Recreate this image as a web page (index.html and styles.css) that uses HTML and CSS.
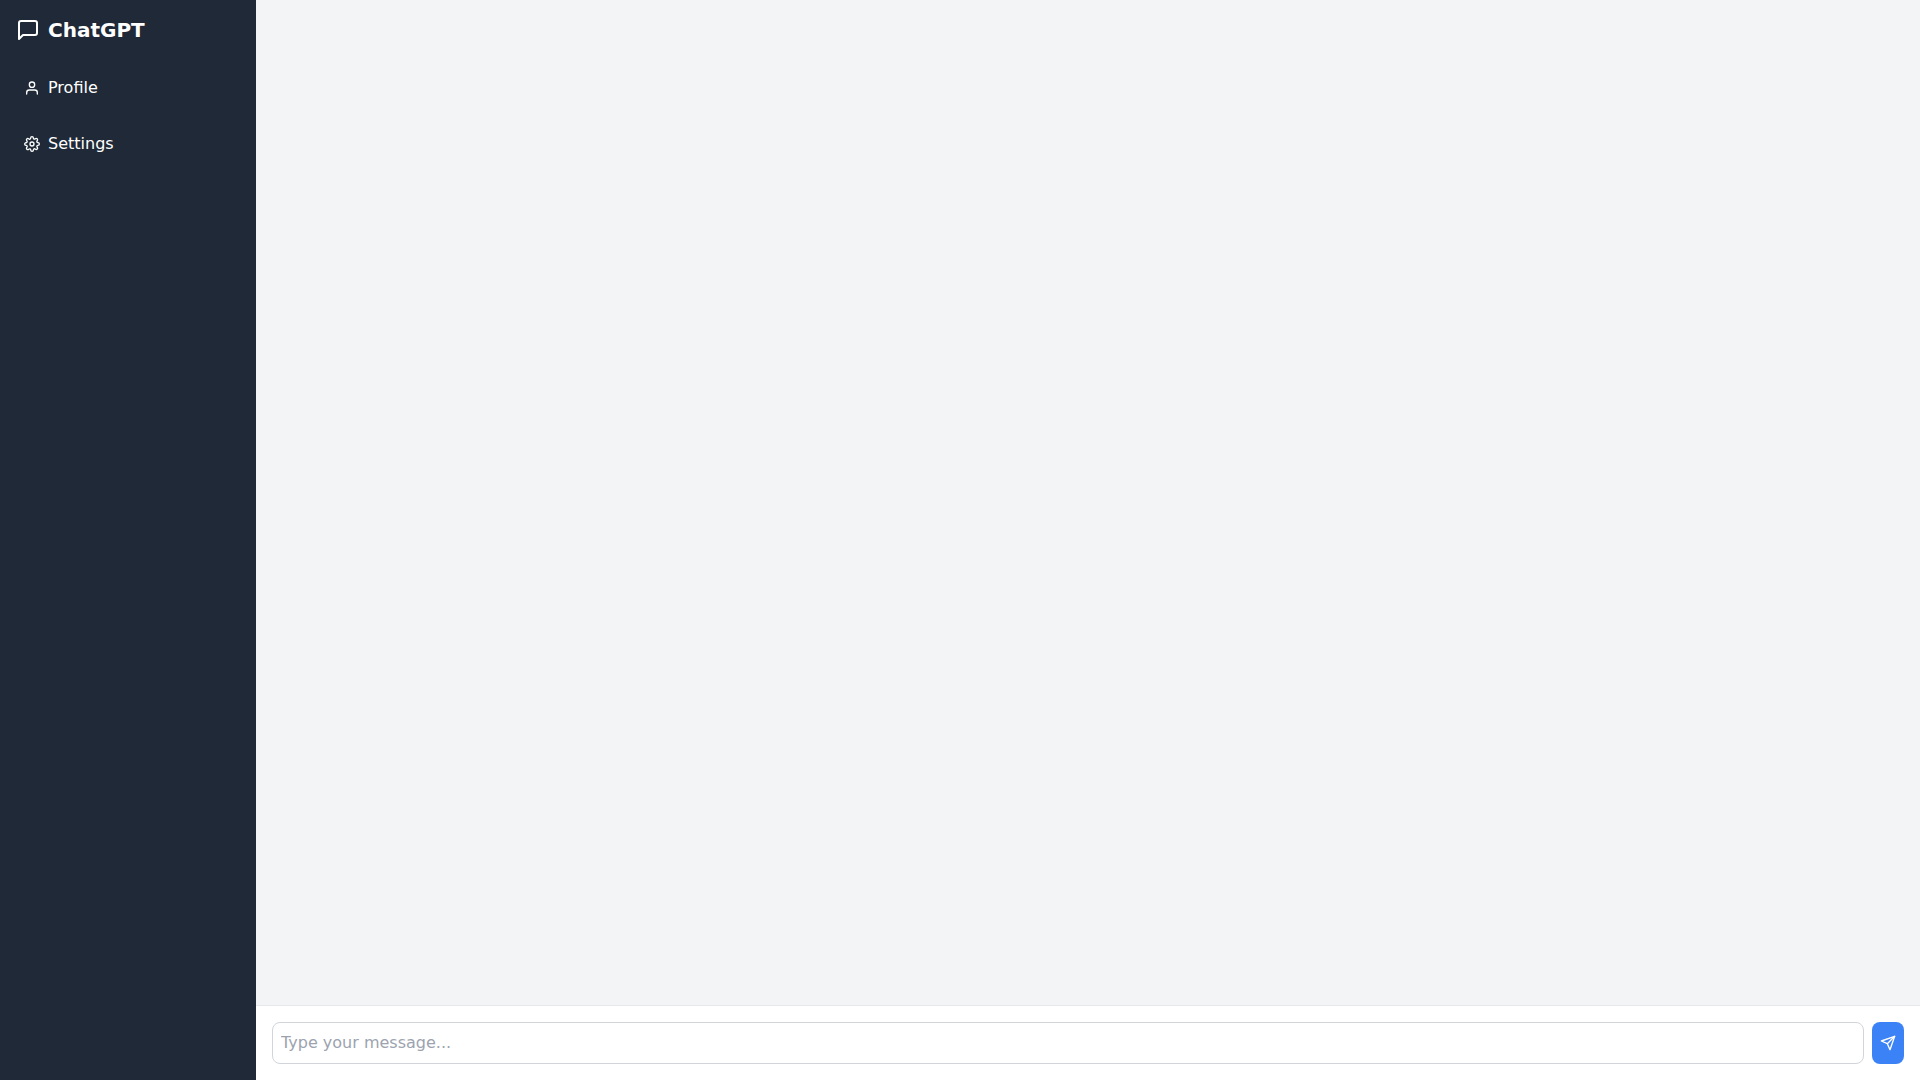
FILE: index.html
```html
<!DOCTYPE html>
<html lang="en">
<head>
    <meta charset="UTF-8">
    <meta name="viewport" content="width=device-width, initial-scale=1.0">
    <title>ChatGPT</title>
    <link rel="stylesheet" href="styles.css">
</head>
<body>

<div class="app">
    <!-- Sidebar -->
    <aside class="sidebar">
        <h1 class="brand">
            <svg class="icon icon-lg" viewBox="0 0 24 24"><path d="M21 15a2 2 0 0 1-2 2H7l-4 4V5a2 2 0 0 1 2-2h14a2 2 0 0 1 2 2z"/></svg>
            ChatGPT
        </h1>
        <nav class="menu">
            <a href="#" class="menu-item">
                <svg class="icon" viewBox="0 0 24 24"><path d="M20 21v-2a4 4 0 0 0-4-4H8a4 4 0 0 0-4 4v2"/><circle cx="12" cy="7" r="4"/></svg>
                Profile
            </a>
            <a href="#" class="menu-item">
                <svg class="icon" viewBox="0 0 24 24"><circle cx="12" cy="12" r="3"/><path d="M19.4 15a1.65 1.65 0 0 0 .33 1.82l.06.06a2 2 0 0 1 0 2.83 2 2 0 0 1-2.83 0l-.06-.06a1.65 1.65 0 0 0-1.82-.33 1.65 1.65 0 0 0-1 1.51V21a2 2 0 0 1-2 2 2 2 0 0 1-2-2v-.09A1.65 1.65 0 0 0 9 19.4a1.65 1.65 0 0 0-1.82.33l-.06.06a2 2 0 0 1-2.83 0 2 2 0 0 1 0-2.83l.06-.06a1.65 1.65 0 0 0 .33-1.82 1.65 1.65 0 0 0-1.51-1H3a2 2 0 0 1-2-2 2 2 0 0 1 2-2h.09A1.65 1.65 0 0 0 4.6 9a1.65 1.65 0 0 0-.33-1.82l-.06-.06a2 2 0 0 1 0-2.83 2 2 0 0 1 2.83 0l.06.06a1.65 1.65 0 0 0 1.82.33H9a1.65 1.65 0 0 0 1-1.51V3a2 2 0 0 1 2-2 2 2 0 0 1 2 2v.09a1.65 1.65 0 0 0 1 1.51 1.65 1.65 0 0 0 1.82-.33l.06-.06a2 2 0 0 1 2.83 0 2 2 0 0 1 0 2.83l-.06.06a1.65 1.65 0 0 0-.33 1.82V9a1.65 1.65 0 0 0 1.51 1H21a2 2 0 0 1 2 2 2 2 0 0 1-2 2h-.09a1.65 1.65 0 0 0-1.51 1z"/></svg>
                Settings
            </a>
        </nav>
    </aside>

    <!-- Chat -->
    <main class="chat">
        <div class="messages"></div>
        <form class="composer">
            <input type="text" class="message-input" placeholder="Type your message..." aria-label="Message">
            <button type="button" class="send-btn" aria-label="Send">
                <svg class="icon" viewBox="0 0 24 24"><line x1="22" y1="2" x2="11" y2="13"/><polygon points="22 2 15 22 11 13 2 9 22 2"/></svg>
            </button>
        </form>
    </main>
</div>

</body>
</html>
```

FILE: styles.css
```css
* {
    box-sizing: border-box;
}

body {
    margin: 0;
    font-family: "DejaVu Sans", sans-serif;
    font-size: 16px;
    line-height: 24px;
}

.app {
    display: flex;
    height: 100vh;
    background-color: #f3f4f6;
}

.sidebar {
    width: 256px;
    flex-shrink: 0;
    padding: 16px;
    background-color: #1f2937;
    color: white;
}

.brand {
    display: flex;
    align-items: center;
    gap: 8px;
    margin: 0 0 24px;
    font-size: 20px;
    line-height: 28px;
    font-weight: bold;
}

.menu {
    display: flex;
    flex-direction: column;
    gap: 16px;
}

.menu-item {
    display: flex;
    align-items: center;
    gap: 8px;
    padding: 8px;
    border-radius: 4px;
    color: inherit;
    text-decoration: none;
}

.menu-item:hover {
    background-color: #374151;
}

.icon {
    width: 16px;
    height: 16px;
    flex-shrink: 0;
    fill: none;
    stroke: currentColor;
    stroke-width: 2;
    stroke-linecap: round;
    stroke-linejoin: round;
}

.icon-lg {
    width: 24px;
    height: 24px;
}

.chat {
    flex: 1;
    display: flex;
    flex-direction: column;
}

.messages {
    flex: 1;
    padding: 16px;
    overflow-y: auto;
}

.composer {
    display: flex;
    gap: 8px;
    padding: 16px;
    background-color: white;
    border-top: 1px solid #e5e7eb;
}

.message-input {
    flex: 1;
    padding: 8px;
    border: 1px solid #d1d5db;
    border-radius: 8px;
    font: inherit;
}

.message-input::placeholder {
    color: #9ca3af;
}

.send-btn {
    display: flex;
    align-items: center;
    padding: 8px;
    border: none;
    border-radius: 8px;
    background-color: #3b82f6;
    color: white;
    cursor: pointer;
}
```
